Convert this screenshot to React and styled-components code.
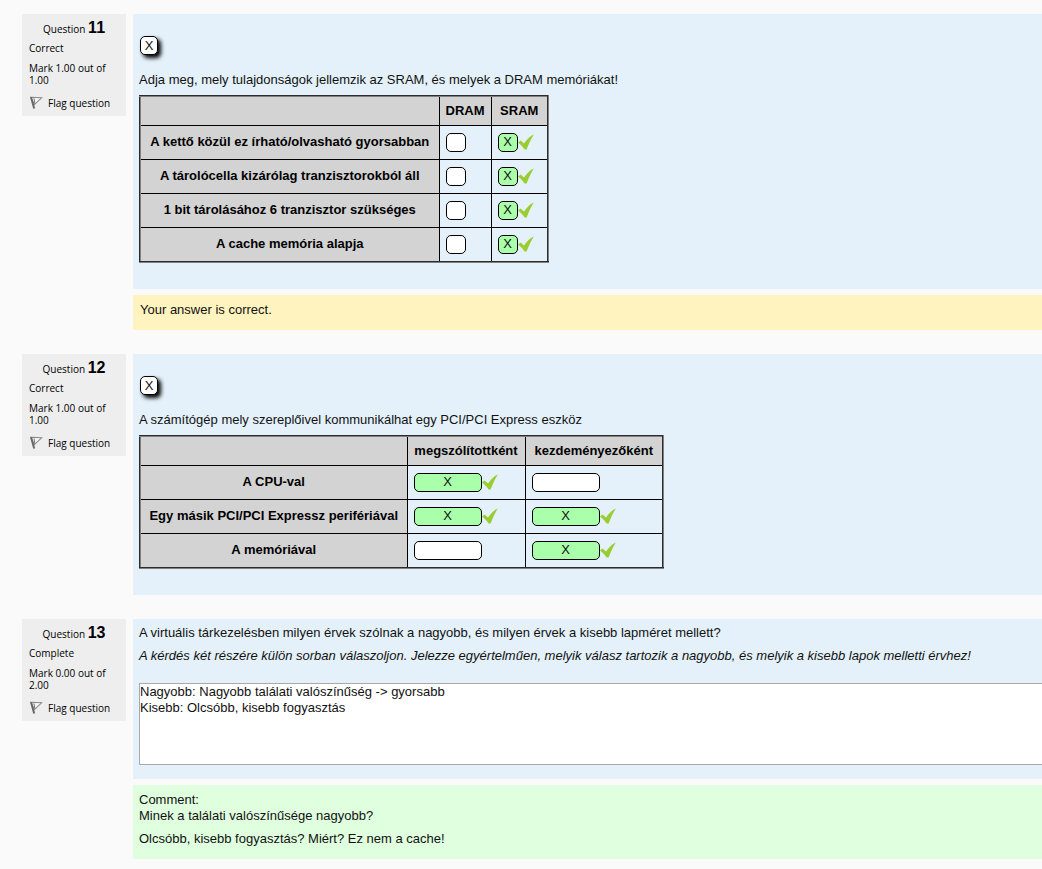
import React from "react";
import styled, { createGlobalStyle } from "styled-components";

const GlobalStyle = createGlobalStyle`
  *, *::before, *::after { box-sizing: border-box; }
  body {
    margin: 0;
    background: #fafafa;
    color: #111;
    font-family: "Liberation Sans", Arial, sans-serif;
    font-size: 13px;
    line-height: 16px;
    overflow-x: hidden;
  }
  p { margin: 0; }
`;

const Page = styled.main`
  display: flex;
  flex-direction: column;
  gap: 24px;
  padding: 14px 0 8px 22px;
`;

const Question = styled.section`
  display: flex;
  align-items: flex-start;
  gap: 7px;
`;

const Info = styled.aside`
  flex: 0 0 104px;
  display: flex;
  flex-direction: column;
  gap: 8px;
  padding: 5px 7px 6px;
  background: #eee;
  color: #000;
  font-family: "Open Sans", "Liberation Sans", sans-serif;
  font-size: 10px;
  font-weight: 500;
  line-height: 12px;
`;

const Heading = styled.h2`
  margin: 0 0 -4px;
  text-align: center;
  font: 500 10px/18px "Open Sans", sans-serif;
`;

const Number = styled.span`
  font: bold 16px/18px "Liberation Sans", sans-serif;
`;

const FlagLink = styled.a`
  display: flex;
  align-items: center;
  gap: 5px;
  padding-top: 2px;
  color: inherit;
  text-decoration: none;
  white-space: nowrap;
`;

const Main = styled.div`
  flex: 1;
  min-width: 0;
  display: flex;
  flex-direction: column;
  gap: 6px;
`;

const Formulation = styled.div`
  display: flex;
  flex-direction: column;
  align-items: flex-start;
  padding: ${(p) => (p.$essay ? "6px 0 14px 6px" : "22px 0 26px 6px")};
  background: #e4f1fa;
`;

const Chip = styled.button`
  width: 18px;
  height: 19px;
  margin: 0 0 17px 1px;
  padding: 0;
  border: 1px solid #000;
  border-radius: 5px;
  background: #fff;
  color: #111;
  font: 13px/16px "Liberation Sans", sans-serif;
  box-shadow: 3px 3px 4px #000;
`;

const Grid = styled.table`
  table-layout: fixed;
  width: ${(p) => p.$width}px;
  margin-top: 7px;
  border-collapse: collapse;
  border: 2px outset #808080;

  tbody tr {
    height: 34px;
  }
  tbody tr:last-child {
    height: 35px;
  }
`;

const HeadCell = styled.th`
  height: ${(p) => (p.scope === "row" ? "auto" : "29px")};
  padding: 0;
  border: 1px solid #000;
  background: #d3d3d3;
  color: #000;
  font-size: 13px;
  white-space: nowrap;
`;

const Cell = styled.td`
  padding: 0 6px;
  border: 1px solid #000;
`;

const Slot = styled.div`
  display: flex;
  align-items: center;
`;

const Drop = styled.button`
  width: ${(p) => p.$width}px;
  height: 19px;
  padding: 0;
  border: 1px solid #000;
  border-radius: 5px;
  background: ${(p) => (p.$filled ? "#afa" : "#fff")};
  color: #111;
  font: 13px/16px "Liberation Sans", sans-serif;
`;

const Feedback = styled.div`
  padding: 7px 7px 12px;
  background: #fff3bf;
`;

const Comment = styled.div`
  padding: 7px 6px 12px;
  background: #dfffdf;
`;

const Paragraph = styled.p`
  margin-top: 7px;
`;

const Answer = styled.textarea`
  display: block;
  width: 100%;
  height: 82px;
  margin-top: 19px;
  padding: 0;
  border: 1px solid #a9a9a9;
  border-right: 0;
  border-radius: 0;
  background: #fff;
  color: #111;
  font: 13px/16px "Liberation Sans", sans-serif;
  resize: none;
`;

function FlagIcon() {
  return (
    <svg width="14" height="14" viewBox="0 0 14 14" aria-hidden="true">
      <path d="M1.8 1.2L12.6 1.8 5.4 8.6Z" fill="#f4f4f4" stroke="#8a8a8a" strokeWidth="1.1" />
      <path d="M5 2.4L5.8 7.6" stroke="#777" strokeWidth="1" />
      <path d="M2 1.2L5.2 12.4" stroke="#666" strokeWidth="1.9" />
    </svg>
  );
}

function Tick() {
  return (
    <svg width="16" height="16" viewBox="0 0 16 16" role="img" aria-label="Correct">
      <path d="M0 8.6L2.6 6.6 6 9.4C8.6 5.4 11.8 2.2 15.8 0.4C13 4.8 10.8 9.6 8.6 15.6H6.6C4.8 12.6 2.6 10.8 0 8.6Z" fill="#9acd32" />
    </svg>
  );
}

function InfoPanel({ number, state, mark, max }) {
  return (
    <Info>
      <Heading>Question <Number>{number}</Number></Heading>
      <p>{state}</p>
      <p>Mark {mark} out of {max}</p>
      <FlagLink href="#flag"><FlagIcon />Flag question</FlagLink>
    </Info>
  );
}

function MarkTable({ widths, slotWidth, columns, rows }) {
  return (
    <Grid $width={widths.reduce((a, b) => a + b, 2)}>
      <colgroup>
        {widths.map((w, i) => <col key={i} width={w} />)}
      </colgroup>
      <thead>
        <tr>
          <HeadCell />
          {columns.map((c) => <HeadCell key={c} scope="col">{c}</HeadCell>)}
        </tr>
      </thead>
      <tbody>
        {rows.map(([label, ...marks]) => (
          <tr key={label}>
            <HeadCell scope="row">{label}</HeadCell>
            {marks.map((on, i) => (
              <Cell key={columns[i]}>
                <Slot>
                  <Drop type="button" $width={slotWidth} $filled={on} aria-label={`${label}: ${columns[i]}`}>
                    {on ? "X" : ""}
                  </Drop>
                  {on && <Tick />}
                </Slot>
              </Cell>
            ))}
          </tr>
        ))}
      </tbody>
    </Grid>
  );
}

export default function App() {
  return (
    <>
      <GlobalStyle />
      <Page>
        <Question>
          <InfoPanel number="11" state="Correct" mark="1.00" max="1.00" />
          <Main>
            <Formulation>
              <Chip type="button">X</Chip>
              <p>Adja meg, mely tulajdonságok jellemzik az SRAM, és melyek a DRAM memóriákat!</p>
              <MarkTable
                widths={[299, 52, 57]}
                slotWidth={20}
                columns={["DRAM", "SRAM"]}
                rows={[
                  ["A kettő közül ez írható/olvasható gyorsabban", false, true],
                  ["A tárolócella kizárólag tranzisztorokból áll", false, true],
                  ["1 bit tárolásához 6 tranzisztor szükséges", false, true],
                  ["A cache memória alapja", false, true],
                ]}
              />
            </Formulation>
            <Feedback>Your answer is correct.</Feedback>
          </Main>
        </Question>
        <Question>
          <InfoPanel number="12" state="Correct" mark="1.00" max="1.00" />
          <Main>
            <Formulation>
              <Chip type="button">X</Chip>
              <p>A számítógép mely szereplőivel kommunikálhat egy PCI/PCI Express eszköz</p>
              <MarkTable
                widths={[267, 118, 138]}
                slotWidth={68}
                columns={["megszólítottként", "kezdeményezőként"]}
                rows={[
                  ["A CPU-val", true, false],
                  ["Egy másik PCI/PCI Expressz perifériával", true, true],
                  ["A memóriával", false, true],
                ]}
              />
            </Formulation>
          </Main>
        </Question>
        <Question>
          <InfoPanel number="13" state="Complete" mark="0.00" max="2.00" />
          <Main>
            <Formulation $essay>
              <p>A virtuális tárkezelésben milyen érvek szólnak a nagyobb, és milyen érvek a kisebb lapméret mellett?</p>
              <Paragraph>
                <em>A kérdés két részére külön sorban válaszoljon. Jelezze egyértelműen, melyik válasz tartozik a nagyobb, és melyik a kisebb lapok melletti érvhez!</em>
              </Paragraph>
              <Answer
                readOnly
                aria-label="Answer"
                value={"Nagyobb: Nagyobb találati valószínűség -> gyorsabb\nKisebb: Olcsóbb, kisebb fogyasztás"}
              />
            </Formulation>
            <Comment>
              <p>Comment:</p>
              <p>Minek a találati valószínűsége nagyobb?</p>
              <Paragraph>Olcsóbb, kisebb fogyasztás? Miért? Ez nem a cache!</Paragraph>
            </Comment>
          </Main>
        </Question>
      </Page>
    </>
  );
}
